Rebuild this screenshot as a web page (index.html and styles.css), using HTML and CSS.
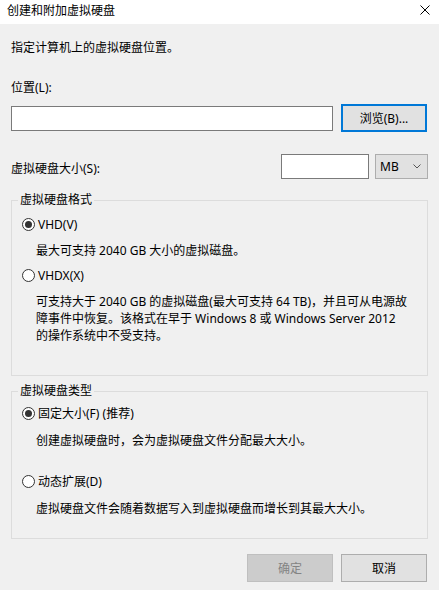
FILE: index.html
```html
<!DOCTYPE html>
<html lang="zh-CN">
<head>
  <meta charset="UTF-8">
  <title>创建和附加虚拟硬盘</title>
  <link rel="stylesheet" href="styles.css">
</head>
<body>
  <!-- Title bar -->
  <div class="titlebar">
    <span class="title">创建和附加虚拟硬盘</span>
    <svg class="close" width="10" height="10" viewBox="0 0 10 10">
      <path d="M0.5 0.5 L9.5 9.5 M9.5 0.5 L0.5 9.5" stroke="#000" stroke-width="1" fill="none"/>
    </svg>
  </div>

  <div class="content">
    <p class="intro">指定计算机上的虚拟硬盘位置。</p>

    <p class="label">位置(L):</p>
    <div class="path-row">
      <div class="textbox path-box"></div>
      <div class="btn btn-focus">浏览(B)...</div>
    </div>

    <div class="size-row">
      <span class="size-label">虚拟硬盘大小(S):</span>
      <div class="textbox size-box"></div>
      <div class="select">
        <span>MB</span>
        <svg width="8" height="5" viewBox="0 0 8 5">
          <path d="M0.5 0.5 L4 4 L7.5 0.5" stroke="#555" stroke-width="1" fill="none"/>
        </svg>
      </div>
    </div>

    <!-- Format -->
    <fieldset class="group group-format">
      <legend>虚拟硬盘格式</legend>
      <div class="radio-row first">
        <span class="radio checked"></span>
        <span>VHD(V)</span>
      </div>
      <p class="desc">最大可支持 2040 GB 大小的虚拟磁盘。</p>
      <div class="radio-row">
        <span class="radio"></span>
        <span>VHDX(X)</span>
      </div>
      <p class="desc">可支持大于 2040 GB 的虚拟磁盘(最大可支持 64 TB)，并且可从电源故<br>障事件中恢复。该格式在早于 Windows 8 或 Windows Server 2012<br>的操作系统中不受支持。</p>
    </fieldset>

    <!-- Type -->
    <fieldset class="group group-type">
      <legend>虚拟硬盘类型</legend>
      <div class="radio-row first">
        <span class="radio checked"></span>
        <span>固定大小(F) (推荐)</span>
      </div>
      <p class="desc">创建虚拟硬盘时，会为虚拟硬盘文件分配最大大小。</p>
      <div class="radio-row spaced">
        <span class="radio"></span>
        <span>动态扩展(D)</span>
      </div>
      <p class="desc">虚拟硬盘文件会随着数据写入到虚拟硬盘而增长到其最大大小。</p>
    </fieldset>

    <div class="actions">
      <div class="btn btn-disabled">确定</div>
      <div class="btn">取消</div>
    </div>
  </div>
</body>
</html>
```

FILE: styles.css
```css
* {
  margin: 0;
  padding: 0;
  box-sizing: border-box;
}

body {
  width: 439px;
  height: 590px;
  background-color: #f0f0f0;
  font-family: "Noto Sans", "Noto Sans CJK SC", sans-serif;
  font-size: 12px;
  line-height: 17px;
  color: #000;
  overflow: hidden;
}

/* Title bar */
.titlebar {
  height: 24px;
  background-color: #fff;
  display: flex;
  justify-content: space-between;
  align-items: center;
  padding: 0 9px 2px 7px;
}

.titlebar .title {
  line-height: 16px;
}

.close {
  display: block;
  margin-top: -2px;
}

.content {
  padding: 0 11px;
}

.intro {
  margin-top: 15px;
}

.label {
  margin-top: 23px;
}

/* Controls */
.textbox {
  height: 25px;
  background-color: #fff;
  border: 1px solid #7a7a7a;
}

.path-row {
  display: flex;
  align-items: center;
  height: 28px;
  margin-top: 8px;
}

.path-box {
  width: 322px;
}

.btn {
  width: 86px;
  height: 28px;
  display: flex;
  align-items: center;
  justify-content: center;
  background-color: #e1e1e1;
  border: 1px solid #adadad;
}

.path-row .btn {
  margin-left: 8px;
}

.btn-focus {
  border: 2px solid #0078d7;
}

.btn-disabled {
  background-color: #cccccc;
  border-color: #bfbfbf;
  color: #838383;
}

.size-row {
  display: flex;
  align-items: center;
  height: 25px;
  margin-top: 22px;
}

.size-label {
  flex: 1;
  padding-top: 3px;
}

.size-box {
  width: 88px;
}

.select {
  width: 53px;
  height: 25px;
  margin-left: 6px;
  display: flex;
  align-items: center;
  justify-content: space-between;
  padding: 0 6px 0 4px;
  background-color: #e1e1e1;
  border: 1px solid #adadad;
}

.select svg {
  display: block;
}

/* Group boxes */
.group {
  width: 417px;
  border: 1px solid #dcdcdc;
  padding: 0 10px;
}

.group legend {
  line-height: 16px;
  padding: 0 2px;
  margin-left: -4px;
}

.group-format {
  margin-top: 13px;
  padding-bottom: 31px;
}

.group-type {
  margin-top: 7px;
  padding-bottom: 21px;
}

.radio-row {
  display: flex;
  align-items: center;
  gap: 3px;
  margin-top: 8px;
}

.group-format .radio-row.first {
  margin-top: 8px;
}

.group-type .radio-row.first {
  margin-top: 6px;
}

.radio-row.spaced {
  margin-top: 24px;
}

.radio {
  width: 13px;
  height: 13px;
  border: 1px solid #333;
  border-radius: 50%;
  background-color: #fff;
  display: flex;
  align-items: center;
  justify-content: center;
}

.radio.checked::after {
  content: "";
  width: 7px;
  height: 7px;
  border-radius: 50%;
  background-color: #333;
}

.desc {
  padding-left: 14px;
  margin-top: 9px;
  white-space: nowrap;
}

.group-type .desc {
  margin-top: 10px;
}

/* Footer buttons */
.actions {
  display: flex;
  justify-content: flex-end;
  gap: 8px;
  margin-top: 15px;
  margin-right: 1px;
}
```
